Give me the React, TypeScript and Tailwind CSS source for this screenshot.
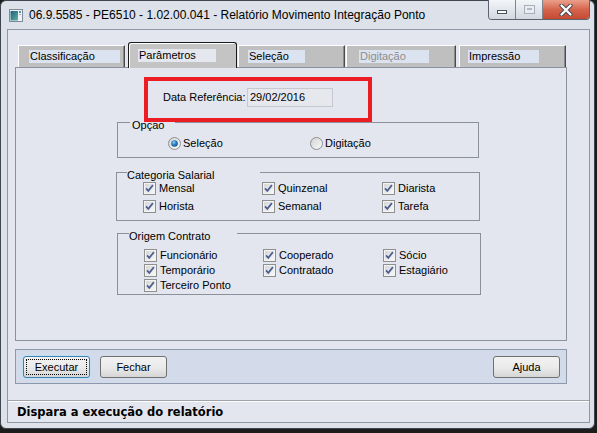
const tabs = [
  { label: 'Classificação', box: 'ml-[3px] first:ml-0 w-[107px]', chip: 'ml-[10px] w-[91px]', text: 'text-black' },
  { label: 'Parâmetros', box: '', chip: '', text: 'text-black', active: true },
  { label: 'Seleção', box: 'ml-[1px] w-[107px]', chip: 'ml-[9px] w-[57px]', text: 'text-black' },
  { label: 'Digitação', box: 'ml-[1px] w-[110px]', chip: 'ml-[12px] w-[70px]', text: 'text-[#8d8d8d]' },
  { label: 'Impressão', box: 'ml-[3px] w-[107px]', chip: 'ml-[8px] w-[71px]', text: 'text-black' },
];

const categorias = ['Mensal', 'Quinzenal', 'Diarista', 'Horista', 'Semanal', 'Tarefa'];
const origens = ['Funcionário', 'Cooperado', 'Sócio', 'Temporário', 'Contratado', 'Estagiário', 'Terceiro Ponto'];

function WindowIcon() {
  return (
    <svg width="14" height="13" viewBox="0 0 14 13" className="shrink-0">
      <defs>
        <linearGradient id="wi" x1="0" y1="0" x2="1" y2="1">
          <stop offset="0" stopColor="#1f5f78" />
          <stop offset="1" stopColor="#5fb0a2" />
        </linearGradient>
      </defs>
      <rect x="0.5" y="0.5" width="13" height="12" fill="#eef1f5" stroke="#7f8a99" />
      <rect x="1.5" y="2" width="7.5" height="9.5" fill="url(#wi)" />
      <rect x="10" y="2" width="2" height="2" fill="#4f9aa5" />
      <rect x="10" y="5" width="2" height="1" fill="#9fb7c4" />
    </svg>
  );
}

function CheckBox() {
  return (
    <svg width="13" height="13" viewBox="0 0 13 13" className="shrink-0">
      <defs>
        <linearGradient id="cb" x1="0" y1="0" x2="1" y2="1">
          <stop offset="0" stopColor="#d6d6d6" />
          <stop offset="1" stopColor="#f8f8f8" />
        </linearGradient>
      </defs>
      <rect x="0.5" y="0.5" width="12" height="12" fill="#f3f3f3" stroke="#8e8f8f" />
      <rect x="2" y="2" width="9" height="9" fill="url(#cb)" />
      <path d="M3 6.4 L5.3 8.9 L9.9 3.1" fill="none" stroke="#4b5f92" strokeWidth="1.7" />
    </svg>
  );
}

function Radio({ checked }: { checked?: boolean }) {
  return (
    <svg width="13" height="13" viewBox="0 0 13 13" className="shrink-0">
      <defs>
        <linearGradient id="rb" x1="0" y1="0" x2="1" y2="1">
          <stop offset="0" stopColor="#d2d2d2" />
          <stop offset="1" stopColor="#fafafa" />
        </linearGradient>
        <radialGradient id="rd" cx="0.4" cy="0.35" r="0.7">
          <stop offset="0" stopColor="#8fd0f5" />
          <stop offset="0.5" stopColor="#2a7fc0" />
          <stop offset="1" stopColor="#154f86" />
        </radialGradient>
      </defs>
      <circle cx="6.5" cy="6.5" r="6" fill="url(#rb)" stroke="#8e8f8f" />
      {checked && <circle cx="6.5" cy="6.5" r="3.3" fill="url(#rd)" />}
    </svg>
  );
}

function Check({ label }: { label: string }) {
  return (
    <div className="flex items-center h-[13px]">
      <CheckBox />
      <span className="ml-[3px] leading-[13px] whitespace-nowrap">{label}</span>
    </div>
  );
}

function Button({ label, focused }: { label: string; focused?: boolean }) {
  if (focused) {
    return (
      <div className="w-[67px] h-[22px] rounded-[3px] border border-[#3c7fb1] bg-linear-to-b from-[#f2f2f2] via-[#ebebeb] to-[#d6d6d6] p-[2px] shadow-[0_0_0_1px_#bfe0f5]">
        <div className="h-full border border-dotted border-black flex items-center justify-center leading-[13px]">
          {label}
        </div>
      </div>
    );
  }
  return (
    <div className="w-[67px] h-[22px] rounded-[3px] border border-[#707070] bg-linear-to-b from-[#f2f2f2] via-[#ebebeb] to-[#d6d6d6] flex items-center justify-center leading-[13px]">
      {label}
    </div>
  );
}

export default function App() {
  return (
    <div className="w-[597px] h-[433px] bg-[#1c1c1c] overflow-hidden font-['Liberation_Sans',Arial,sans-serif] text-[11px] text-black">
      <div className="w-[595px] h-[429px] rounded-[6px] border border-[#3f464f] bg-[#dde1e9] flex flex-col">
        {/* title bar */}
        <div className="h-[28px] flex items-start">
          <div className="mt-[8px] ml-[8px]">
            <WindowIcon />
          </div>
          <span className="ml-[6px] mt-[6px] text-[12px] leading-[16px] whitespace-nowrap">
            06.9.5585 - PE6510 - 1.02.00.041 - Relatório Movimento Integração Ponto
          </span>
          <div className="ml-auto mr-[4px] -mt-px flex h-[20px] rounded-b-[4px] border border-t-0 border-[#5b636f] overflow-hidden">
            <div className="w-[27px] bg-linear-to-b from-[#f3f5f8] to-[#d3d8e1] border-r border-[#7d8591] flex items-end justify-center pb-[5px]">
              <div className="w-[10px] h-[4px] bg-white border border-[#4a5260]" />
            </div>
            <div className="w-[27px] bg-linear-to-b from-[#f3f5f8] to-[#d3d8e1] border-r border-[#7d8591] flex items-center justify-center">
              <div className="w-[11px] h-[9px] border border-[#a9afb8] bg-[#e9ecf1] p-[2px]">
                <div className="h-full border-t-2 border-[#b5bbc4]" />
              </div>
            </div>
            <div className="w-[46px] bg-linear-to-b from-[#eaa08c] via-[#d5644c] to-[#c44a33] flex items-center justify-center">
              <svg width="14" height="12" viewBox="0 0 14 12">
                <path d="M2.5 1.5 L11.5 10.5 M11.5 1.5 L2.5 10.5" stroke="#4a4a52" strokeWidth="4.2" strokeLinecap="round" />
                <path d="M2.5 1.5 L11.5 10.5 M11.5 1.5 L2.5 10.5" stroke="#ffffff" strokeWidth="2.2" strokeLinecap="round" />
              </svg>
            </div>
          </div>
        </div>

        {/* client area */}
        <div className="ml-[6px] w-[583px] h-[394px] border border-[#8e97a7] bg-[#e3e6ee] flex flex-col">
          {/* tabs */}
          <div className="h-[37px] pt-[12px] pl-[10px] flex items-end">
            {tabs.map((t) =>
              t.active ? (
                <div
                  key={t.label}
                  className="relative z-10 ml-[3px] w-[109px] h-[26px] -mb-px rounded-t-[3px] border border-b-0 border-[#1a1a1a] bg-[#c4c4c4] shadow-[inset_1px_1px_0_#ffffff]"
                >
                  <div className="ml-[9px] mt-[6px] w-[78px] h-[13px] bg-[#e4e7ee] pl-[1px] leading-[13px]">{t.label}</div>
                </div>
              ) : (
                <div
                  key={t.label}
                  className={`${t.box} h-[22px] border-t border-l border-r border-t-white border-l-white border-r-[#4b4b4b] bg-[#bfbfbf] shadow-[inset_-1px_0_0_#8a8a8a]`}
                >
                  <div className={`${t.chip} ${t.text} mt-[4px] h-[13px] bg-[#dce3f0] pl-[1px] leading-[13px]`}>{t.label}</div>
                </div>
              )
            )}
          </div>

          {/* Parâmetros page */}
          <div className="ml-[7px] w-[552px] h-[274px] border border-[#8b929d] bg-[#e3e6ee]">
            <div className="relative mt-[20px] ml-[147px] w-[170px] h-[19px] flex items-center">
              <span className="w-[84px] leading-[13px]">Data Referência:</span>
              <div className="w-[86px] h-[19px] border border-[#c6c9cf] bg-[#e6e8ee] pl-[2px] flex items-center leading-[13px]">
                29/02/2016
              </div>
              <div className="absolute -left-[19px] -top-[11px] w-[228px] h-[45px] border-4 border-[#ec1c24]" />
            </div>

            <fieldset className="mt-[5px] ml-[101px] w-[362px] border border-[#8b9099] pb-[7px]">
              <legend className="ml-[12px] w-[45px] pt-[7px] pl-[2px] leading-[13px]">Opçao</legend>
              <div className="mt-[5px] pl-[50px] flex">
                <label className="w-[142px] flex items-center h-[13px]">
                  <Radio checked />
                  <span className="ml-[2px] leading-[13px]">Seleção</span>
                </label>
                <label className="flex items-center h-[13px]">
                  <Radio />
                  <span className="ml-[2px] leading-[13px]">Digitação</span>
                </label>
              </div>
            </fieldset>

            <fieldset className="mt-[4px] ml-[100px] w-[364px] border border-[#8b9099] pb-[7px]">
              <legend className="ml-[10px] w-[133px] pt-[7px] leading-[13px]">Categoria Salarial</legend>
              <div className="pl-[26px] grid grid-cols-[119px_120px_auto] gap-y-[5px]">
                {categorias.map((c) => (
                  <Check key={c} label={c} />
                ))}
              </div>
            </fieldset>

            <fieldset className="mt-[2px] ml-[101px] w-[364px] border border-[#8b9099] pb-[2px]">
              <legend className="ml-[11px] w-[108px] pt-[7px] leading-[13px]">Origem Contrato</legend>
              <div className="mt-[6px] pl-[26px] grid grid-cols-[119px_120px_auto] gap-y-[2px]">
                {origens.map((o) => (
                  <Check key={o} label={o} />
                ))}
              </div>
            </fieldset>
          </div>

          {/* action buttons */}
          <div className="mt-[8px] ml-[7px] w-[552px] h-[35px] border border-[#8c99ad] bg-[#d3dbeb] pt-[6px] pl-[7px] pr-[6px] flex items-start">
            <Button label="Executar" focused />
            <div className="ml-[10px]">
              <Button label="Fechar" />
            </div>
            <div className="ml-auto">
              <Button label="Ajuda" />
            </div>
          </div>

          {/* status bar */}
          <div className="mt-auto h-[22px] border-t border-[#9ea3ab] shadow-[inset_0_1px_0_#ffffff] pl-[9px] flex items-center">
            <span className="font-['DejaVu_Sans',sans-serif] font-bold text-[11.5px] leading-[14px]">Dispara a execução do relatório</span>
          </div>
        </div>
      </div>
    </div>
  );
}
